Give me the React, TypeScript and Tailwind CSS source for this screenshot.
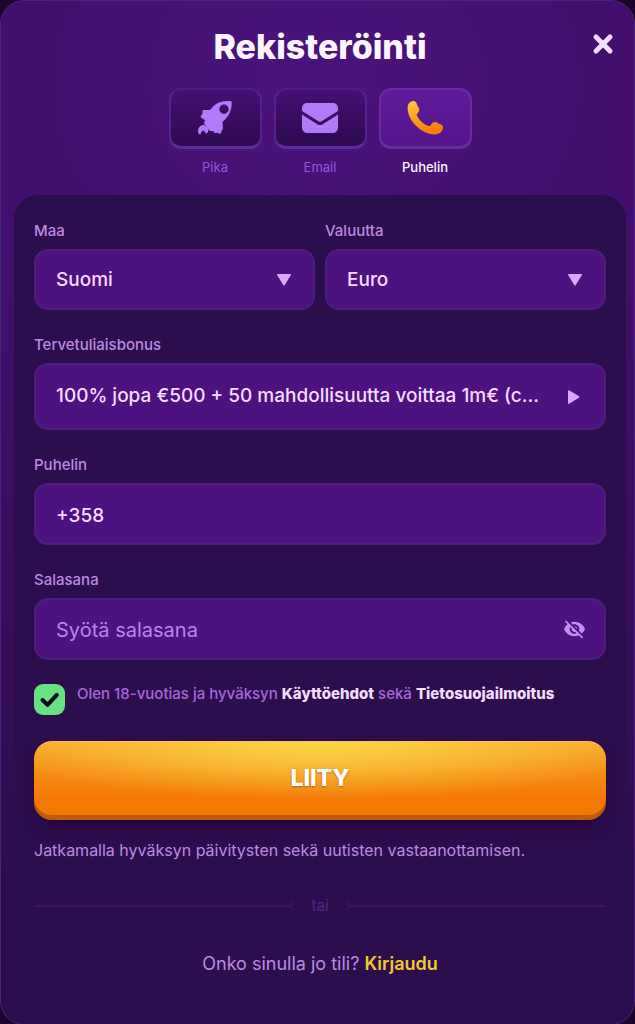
import React, { useState } from 'react';
import { MdVisibilityOff } from 'react-icons/md';

type Method = 'pika' | 'email' | 'puhelin';

const RocketIcon = () => (
  <svg className="h-9 w-9" viewBox="0 0 36 36" aria-hidden="true">
    <path
      fill="#b07afb"
      fillRule="evenodd"
      d="M31 1h2c1.200 0 1.700.6 1.700 1.800C34.700 10 32.500 16 25.500 22l.5 6c0 1.200-.6 1.700-1.200 2.400L24 33c-.5.7-1.200.8-2 .4l-1.500-.7-2 .3c-.8 0-1.200-.5-1.500-1.500l-3-.4c-1.200-.2-1.800-.8-2.500-1.700L7.500 24c-.6-.8-.6-1.300-.2-2l.7-1.800-3.700-2.400c-.8-.5-.9-1-.4-1.800l1.500-2.300.1-2.400c.1-.8.500-1.200 1.300-1.200l6.200-.1 3.500-4C20 2.500 25 1 31 1zM27 4.500a4.700 4.700 0 1 0 0 9.400 4.700 4.700 0 0 0 0-9.400z"
    />
    <path fill="#b07afb" d="M5.500 25c1.500-.6 2.200 0 2.700 1 2.300.2 3.500 2 3.200 4.200-.2 2-1.300 3.200-2.700 3.500-.7-1.800-1.300-2.700-2.400-3.200-1.500.6-2.400 2-2.800 4-1.300.3-2.500-1-2.500-3.500C1.100 27.500 3 25.800 5.500 25z" />
  </svg>
);

const MailIcon = () => (
  <svg className="h-9 w-9" viewBox="0 0 36 36" fill="#b07afb" aria-hidden="true">
    <path d="M5 3h26a5 5 0 0 1 5 5v1.500c0 1-.4 1.600-1.200 2.200L20 21a3.500 3.500 0 0 1-4 0L1.200 11.700C.4 11.100 0 10.500 0 9.500V8a5 5 0 0 1 5-5z" />
    <path d="M0 14.500l15.300 9.700a5 5 0 0 0 5.400 0L36 14.500V27.500a5.500 5.500 0 0 1-5.500 5.500h-25A5.500 5.500 0 0 1 0 27.500z" />
  </svg>
);

const PhoneIcon = () => (
  <svg className="h-9 w-9" viewBox="0 0 36 36" aria-hidden="true">
    <defs>
      <linearGradient id="phone" x1="0" y1="0" x2="0.3" y2="1">
        <stop offset="0" stopColor="#fcc83a" />
        <stop offset="1" stopColor="#f77f06" />
      </linearGradient>
    </defs>
    <path
      fill="url(#phone)"
      d="M5.500 1c2.200-.5 3.800.6 4.300 2.800.2 1 .5 1.800 1.200 2.600 2 2.300 1.600 5-.8 7.300-.7.8-.5 1.600 0 2.500 2.700 4.800 6.300 8.200 11.300 9.700 1.300.3 2-.2 2.500-1.200 1.200-2.400 3.500-3.300 6-2.300 1 .5 1.500 1.200 2.800 1.600 2.200.6 3.400 1.900 3.200 3.800-.4 3.600-3.500 6.500-8 6.700C15 35 .8 21 .6 8.600.5 4.500 2 1.800 5.500 1z"
    />
  </svg>
);

const methods: { id: Method; label: string; icon: React.ReactNode }[] = [
  { id: 'pika', label: 'Pika', icon: <RocketIcon /> },
  { id: 'email', label: 'Email', icon: <MailIcon /> },
  { id: 'puhelin', label: 'Puhelin', icon: <PhoneIcon /> },
];

interface SelectFieldProps {
  id: string;
  label: string;
  options: string[];
}

const SelectField: React.FC<SelectFieldProps> = ({ id, label, options }) => (
  <div className="min-w-0 flex-1">
    <label htmlFor={id} className="mb-2 block text-[15px] leading-5 font-medium text-[#bd8ae0]">
      {label}
    </label>
    <div className="relative">
      <select
        id={id}
        className="h-[61px] w-full appearance-none rounded-[14px] border-2 border-[#4f1d7c] bg-[#4c127f] px-5 pt-[2px] text-[19px] font-medium text-[#f5dcff]"
      >
        {options.map((option) => (
          <option key={option}>{option}</option>
        ))}
      </select>
      <svg className="pointer-events-none absolute top-1/2 right-6 h-3 w-[14px] -translate-y-1/2" viewBox="0 0 14 12" fill="#dca6fb" aria-hidden="true">
        <path d="M.5 0h13q.7.300.4 1L7.800 11q-.8 1-1.600 0L.1 1Q-.2.300.5 0z" />
      </svg>
    </div>
  </div>
);

export default function App() {
  const [method, setMethod] = useState<Method>('puhelin');
  const [phone, setPhone] = useState('+358');
  const [password, setPassword] = useState('');
  const [visible, setVisible] = useState(false);
  const [accepted, setAccepted] = useState(true);

  return (
    <div className="min-h-screen bg-[#1a0628] font-['Inter','Liberation_Sans',sans-serif]">
      <main className="relative flex min-h-screen flex-col rounded-[24px] border border-[#4d217c] bg-[radial-gradient(ellipse_300px_260px_at_50%_80px,#4b137c_0%,transparent_100%),linear-gradient(#430f6e_0%,#430f6e_25%,#2d0e4c_85%)] pt-6 pr-2 pl-[13px]">
        <h1 className="text-center text-[34px] leading-11 font-extrabold text-[#fdf5ff]">Rekisteröinti</h1>
        <button type="button" aria-label="Sulje" className="absolute top-8 right-5 cursor-pointer">
          <svg className="h-[22px] w-[22px]" viewBox="0 0 22 22" fill="none" stroke="#f5dcff" strokeWidth="5" strokeLinecap="round" aria-hidden="true">
            <path d="M4 4l14 14M18 4L4 18" />
          </svg>
        </button>

        <div className="mt-[19px] flex justify-center gap-3">
          {methods.map(({ id, label, icon }) => {
            const active = id === method;
            return (
              <button
                key={id}
                type="button"
                aria-pressed={active}
                onClick={() => setMethod(id)}
                className="flex w-[93px] cursor-pointer flex-col items-center"
              >
                <span
                  className={`flex h-[61px] w-full items-center justify-center rounded-[12px] border-2 border-b-3 ${
                    active
                      ? 'border-[#6a2aa4] bg-linear-to-b from-[#5f1b9a] to-[#54158a]'
                      : 'border-[#56218e] border-t-[#50198a] border-b-[#602a9e] bg-linear-to-b from-[#441074] to-[#2e0b50]'
                  }`}
                >
                  {icon}
                </span>
                <span className={`mt-2 text-[13px] leading-5 ${active ? 'font-medium text-[#fdf5ff]' : 'text-[#9454e0]'}`}>{label}</span>
              </button>
            );
          })}
        </div>

        <form
          onSubmit={(e) => e.preventDefault()}
          className="mt-[18px] flex flex-1 flex-col rounded-[24px] bg-[#2d0e4c] px-5 pt-[26px] pb-12"
        >
          <div className="flex gap-[10px]">
            <SelectField id="country" label="Maa" options={['Suomi']} />
            <SelectField id="currency" label="Valuutta" options={['Euro']} />
          </div>

          <div className="mt-[25px]">
            <span id="bonus-label" className="mb-2 block text-[15px] leading-5 font-medium text-[#bd8ae0]">
              Tervetuliaisbonus
            </span>
            <button
              type="button"
              aria-labelledby="bonus-label bonus"
              className="flex h-[67px] w-full cursor-pointer items-center justify-between rounded-[14px] border-2 border-[#4f1d7c] bg-[#4c127f] pr-6 pl-5 text-left text-[19px] font-medium text-[#f5dcff]"
            >
              <span id="bonus" className="truncate">100% jopa €500 + 50 mahdollisuutta voittaa 1m€ (c...</span>
              <svg className="h-[14px] w-3 shrink-0" viewBox="0 0 12 14" fill="#dca6fb" aria-hidden="true">
                <path d="M1 .3L11 6.200q1 .8 0 1.600L1 13.700q-.7.200-1-.5V.8Q.3.100 1 .3z" />
              </svg>
            </button>
          </div>

          <div className="mt-[25px]">
            <label htmlFor="phone-number" className="mb-2 block text-[15px] leading-5 font-medium text-[#bd8ae0]">
              Puhelin
            </label>
            <input
              id="phone-number"
              type="tel"
              value={phone}
              onChange={(e) => setPhone(e.target.value)}
              className="block h-[62px] w-full rounded-[14px] border-2 border-[#4f1d7c] bg-[#4c127f] px-5 pt-[2px] text-[19px] font-medium text-[#f5dcff]"
            />
          </div>

          <div className="mt-[25px]">
            <label htmlFor="password" className="mb-2 block text-[15px] leading-5 font-medium text-[#bd8ae0]">
              Salasana
            </label>
            <div className="relative">
              <input
                id="password"
                type={visible ? 'text' : 'password'}
                placeholder="Syötä salasana"
                value={password}
                onChange={(e) => setPassword(e.target.value)}
                className="block h-[62px] w-full rounded-[14px] border-2 border-[#4f1d7c] bg-[#4c127f] pt-[2px] pr-14 pl-5 text-[20px] text-[#f5dcff] placeholder:text-[#bd82ec]"
              />
              <button
                type="button"
                aria-label="Näytä salasana"
                onClick={() => setVisible(!visible)}
                className="absolute top-1/2 right-5 -translate-y-1/2 cursor-pointer text-[#c38df2]"
              >
                <MdVisibilityOff className="h-[23px] w-[23px]" />
              </button>
            </div>
          </div>

          <div className="mt-6 flex items-start gap-3">
            <span className="relative h-[31px] w-[31px] shrink-0">
              <input
                id="terms"
                type="checkbox"
                checked={accepted}
                onChange={(e) => setAccepted(e.target.checked)}
                className="block h-full w-full appearance-none rounded-[9px] bg-[#4c127f] checked:bg-[#66e283]"
              />
              {accepted && (
                <svg className="pointer-events-none absolute inset-0 h-full w-full" viewBox="0 0 31 31" fill="none" stroke="#120a1c" strokeWidth="4" strokeLinecap="round" strokeLinejoin="round" aria-hidden="true">
                  <path d="M8.500 16l5 4.800L22.800 11" />
                </svg>
              )}
            </span>
            <label htmlFor="terms" className="text-[15px] leading-5 font-medium text-[#a967dc]">
              Olen 18-vuotias ja hyväksyn{' '}
              <a href="#kayttoehdot" className="font-extrabold text-[#f5dcff]">Käyttöehdot</a> sekä{' '}
              <a href="#tietosuoja" className="font-extrabold text-[#f5dcff]">Tietosuojailmoitus</a>
            </label>
          </div>

          <button
            type="submit"
            className="mt-[26px] h-[79px] w-full cursor-pointer rounded-[18px] bg-[radial-gradient(ellipse_60%_75%_at_50%_0%,#fbd848_0%,transparent_100%),linear-gradient(#f8a62c_0%,#f37804_72%)] pb-1 text-[23px] font-extrabold text-white shadow-[inset_0_-5px_0_#c05a0c,inset_0_1px_0_#fbc25c,0_10px_16px_-4px_#220739] [text-shadow:0_1px_2px_#b8601a]"
          >
            LIITY
          </button>

          <p className="mt-5 text-[16px] leading-5 text-[#bd8ae0]">
            Jatkamalla hyväksyn päivitysten sekä uutisten vastaanottamisen.
          </p>

          <div className="mt-9 flex items-center text-[15px] leading-5 text-[#532485]">
            <span className="h-[2px] flex-1 bg-[#3a1361]" />
            <svg className="h-[10px] w-[6px]" viewBox="0 0 6 10" fill="none" stroke="#3a1361" strokeWidth="2" aria-hidden="true">
              <path d="M5 1L1 5l4 4" />
            </svg>
            <span className="px-4">tai</span>
            <svg className="h-[10px] w-[6px]" viewBox="0 0 6 10" fill="none" stroke="#3a1361" strokeWidth="2" aria-hidden="true">
              <path d="M1 1l4 4-4 4" />
            </svg>
            <span className="h-[2px] flex-1 bg-[#3a1361]" />
          </div>

          <p className="mt-9 text-center text-[18px] leading-6 text-[#bd8ae0]">
            Onko sinulla jo tili?{' '}
            <a href="#kirjaudu" className="font-semibold text-[#f3c72c]">Kirjaudu</a>
          </p>
        </form>
      </main>
    </div>
  );
}
